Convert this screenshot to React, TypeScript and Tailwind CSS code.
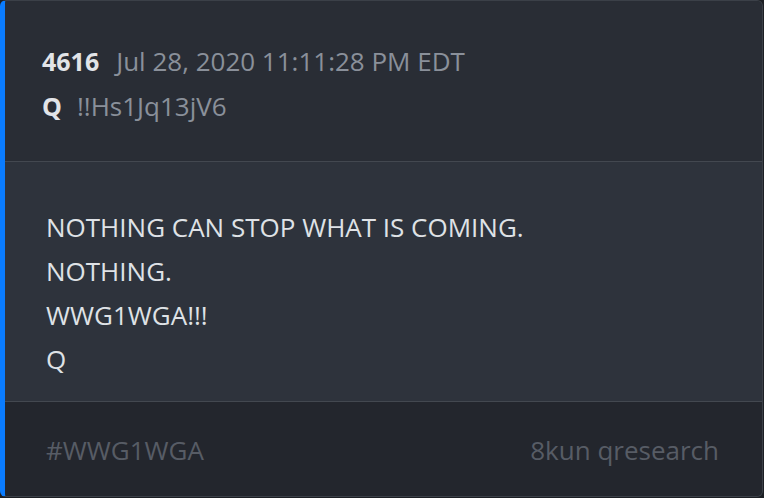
import React from "react";

export default function App() {
  const font = { fontFamily: '"Open Sans", "Noto Sans", sans-serif' };
  return (
    <div className="w-[764px] h-[498px] bg-[#1c1f24]" style={font}>
      <div className="w-[763px] h-[497px] flex flex-col rounded-[6px] overflow-hidden border border-[#3b4048] border-l-[5px] border-l-[#0a7cff] bg-[#292d35]">
        <div className="h-[160px] shrink-0 bg-[#292d35] pl-[37px] pt-[42px] flex flex-col gap-[9px]">
          <div className="flex items-baseline gap-[17px] h-[36px] leading-[36px]">
            <span className="text-[25px] font-bold text-[#e2e4e8]">4616</span>
            <span className="text-[26px] text-[#8a909a]">Jul 28, 2020 11:11:28 PM EDT</span>
          </div>
          <div className="flex items-baseline gap-[15px] h-[36px] leading-[36px]">
            <span className="text-[25px] font-bold text-[#e2e4e8]">Q</span>
            <span className="text-[26px] text-[#8a909a]">!!Hs1Jq13jV6</span>
          </div>
        </div>
        <div className="h-[1px] bg-[#434850]" />
        <div className="h-[239px] shrink-0 bg-[#2e333c] pl-[41px] pt-[43px] text-[26px] leading-[44px] text-[#dfe2e6]">
          <div>NOTHING CAN STOP WHAT IS COMING.</div>
          <div>NOTHING.</div>
          <div>WWG1WGA!!!</div>
          <div>Q</div>
        </div>
        <div className="h-[1px] bg-[#434850]" />
        <div className="flex-1 bg-[#23262d] pl-[41px] pr-[43px] pt-[2px] flex items-center justify-between text-[26px] text-[#575c65]">
          <span>#WWG1WGA</span>
          <span>8kun qresearch</span>
        </div>
      </div>
    </div>
  );
}
